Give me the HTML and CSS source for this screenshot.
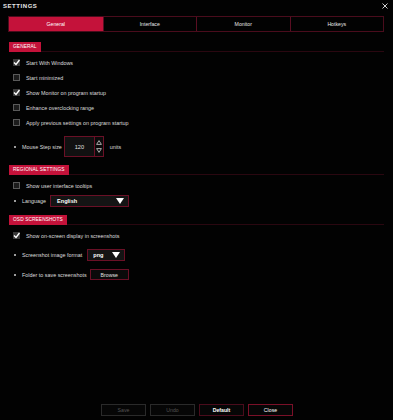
FILE: index.html
```html
<!DOCTYPE html>
<html>
<head>
<meta charset="utf-8">
<link rel="stylesheet" href="styles.css">
</head>
<body>
<div class="window">
  <div class="header">
    <div class="title">SETTINGS</div>
    <svg class="close" width="6" height="6" viewBox="0 0 6 6"><path d="M0.5 0.5 L5.5 5.5 M5.5 0.5 L0.5 5.5" stroke="#d0d0d0" stroke-width="1"/></svg>
  </div>
  <div class="tabs">
    <div class="tab active">General</div>
    <div class="tab">Interface</div>
    <div class="tab">Monitor</div>
    <div class="tab">Hotkeys</div>
  </div>

  <div class="section first">
    <div class="section-head"><span class="badge">GENERAL</span></div>
    <div class="row check-row"><span class="cb checked"><svg width="7" height="7" viewBox="0 0 7 7"><path d="M1 3.5 L3 5.5 L6.5 1" fill="none" stroke="#fff" stroke-width="1.4"/></svg></span><span class="lbl">Start With Windows</span></div>
    <div class="row check-row"><span class="cb"></span><span class="lbl">Start minimized</span></div>
    <div class="row check-row"><span class="cb checked"><svg width="7" height="7" viewBox="0 0 7 7"><path d="M1 3.5 L3 5.5 L6.5 1" fill="none" stroke="#fff" stroke-width="1.4"/></svg></span><span class="lbl">Show Monitor on program startup</span></div>
    <div class="row check-row"><span class="cb"></span><span class="lbl">Enhance overclocking range</span></div>
    <div class="row check-row"><span class="cb"></span><span class="lbl">Apply previous settings on program startup</span></div>
    <div class="row step-row">
      <span class="dot"></span><span class="blbl step-lbl">Mouse Step size</span>
      <div class="spin">
        <div class="spin-val">120</div>
        <div class="spin-btns">
          <svg width="6" height="5" viewBox="0 0 6 5"><path d="M3 0.6 L5.4 4.4 L0.6 4.4 Z" fill="none" stroke="#bbb" stroke-width="0.9"/></svg>
          <svg width="6" height="5" viewBox="0 0 6 5"><path d="M3 4.4 L5.4 0.6 L0.6 0.6 Z" fill="none" stroke="#bbb" stroke-width="0.9"/></svg>
        </div>
      </div>
      <span class="units">units</span>
    </div>
  </div>

  <div class="section regional">
    <div class="section-head"><span class="badge">REGIONAL SETTINGS</span></div>
    <div class="row check-row"><span class="cb"></span><span class="lbl">Show user interface tooltips</span></div>
    <div class="row opt-row">
      <span class="dot"></span><span class="blbl lang-lbl">Language</span>
      <div class="select lang"><span>English</span><svg width="8" height="6" viewBox="0 0 8 6"><path d="M0 0 L8 0 L4 6 Z" fill="#fff"/></svg></div>
    </div>
  </div>

  <div class="section osd">
    <div class="section-head"><span class="badge">OSD SCREENSHOTS</span></div>
    <div class="row check-row"><span class="cb checked"><svg width="7" height="7" viewBox="0 0 7 7"><path d="M1 3.5 L3 5.5 L6.5 1" fill="none" stroke="#fff" stroke-width="1.4"/></svg></span><span class="lbl">Show on-screen display in screenshots</span></div>
    <div class="row opt-row fmt">
      <span class="dot"></span><span class="blbl">Screenshot image format</span>
      <div class="select format"><span>png</span><svg width="8" height="6" viewBox="0 0 8 6"><path d="M0 0 L8 0 L4 6 Z" fill="#fff"/></svg></div>
    </div>
    <div class="row opt-row folder">
      <span class="dot"></span><span class="blbl folder-lbl">Folder to save screenshots</span>
      <div class="btn browse">Browse</div>
    </div>
  </div>

  <div class="footer">
    <div class="btn foot disabled">Save</div>
    <div class="btn foot disabled">Undo</div>
    <div class="btn foot default">Default</div>
    <div class="btn foot close-btn">Close</div>
  </div>
</div>
</body>
</html>
```

FILE: styles.css
```css
html, body {
  margin: 0;
  padding: 0;
  background: #000;
}
body {
  font-family: "Liberation Sans", Arial, sans-serif;
  color: #dcdcdc;
  font-size: 5.4px;
}
.window {
  width: 393px;
  height: 420px;
  display: flex;
  flex-direction: column;
  box-sizing: border-box;
  background: #020202;
}
.header {
  height: 16px;
  display: flex;
  justify-content: space-between;
  align-items: flex-start;
  padding: 2px 5px 0 3px;
  box-sizing: border-box;
}
.title {
  font-size: 6px;
  font-weight: bold;
  letter-spacing: 0.55px;
  line-height: 8px;
  color: #e8e8e8;
}
.close {
  margin-top: 1px;
}
.tabs {
  margin: 0 9px 0 8px;
  height: 16px;
  display: grid;
  grid-template-columns: repeat(4, 1fr);
  border: 1px solid #4a0c1c;
  box-sizing: border-box;
}
.tab {
  display: flex;
  align-items: center;
  justify-content: center;
  border-left: 1px solid #5a0e22;
  color: #e6e6e6;
  font-size: 5.2px;
}
.tab:first-child {
  border-left: none;
}
.tab.active {
  background: #c4123a;
  color: #fff;
}
.section {
  margin: 0 9px 0 9px;
  display: flex;
  flex-direction: column;
}
.section.first { margin-top: 10px; }
.section.regional { margin-top: 8px; }
.section.osd { margin-top: 7px; }
.section-head {
  display: flex;
  height: 10px;
  margin-bottom: 3px;
}
.section-head::after {
  content: "";
  flex: 1;
  border-bottom: 1px solid #2a0710;
}
.badge {
  background: #c4123a;
  color: #fff;
  font-size: 4.8px;
  line-height: 10px;
  padding: 0 4px;
  letter-spacing: 0.1px;
}
.row {
  display: flex;
  align-items: center;
  height: 15px;
  padding-left: 4px;
}
.cb {
  width: 7px;
  height: 7px;
  box-sizing: border-box;
  border: 1px solid #5a5a5a;
  background: #1c1c1c;
  display: flex;
  align-items: center;
  justify-content: center;
  margin-right: 6px;
}
.cb.checked {
  border: none;
  background: #3a3a3a;
}
.lbl { color: #dcdcdc; }
.dot {
  width: 2px;
  height: 2px;
  border-radius: 50%;
  background: #d0d0d0;
  margin: 0 6px 0 1px;
}
.blbl { margin-right: 5px; }
.step-lbl { margin-right: 2px; }
.lang-lbl { margin-right: 4px; }
.folder-lbl { margin-right: 3px; }
.step-row {
  height: 21px;
  margin-top: 6px;
}
.spin {
  display: flex;
  height: 21px;
}
.spin-val {
  width: 31px;
  box-sizing: border-box;
  border: 1px solid #6a1026;
  background: #111;
  display: flex;
  align-items: center;
  justify-content: center;
  color: #e0e0e0;
  font-size: 5.6px;
}
.spin-btns {
  width: 9px;
  box-sizing: border-box;
  border: 1px solid #6a1026;
  border-left: none;
  background: #0a0a0a;
  display: flex;
  flex-direction: column;
  align-items: center;
  justify-content: space-evenly;
}
.units { margin-left: 6px; }
.opt-row { height: 15px; }
.select {
  height: 12px;
  box-sizing: border-box;
  border: 1px solid #6a1026;
  background: #141414;
  display: flex;
  align-items: center;
  justify-content: space-between;
  padding: 0 4px 0 6px;
  font-weight: bold;
  color: #fff;
  font-size: 5.6px;
}
.select.lang { width: 79px; }
.select.format { width: 38px; padding-left: 5px; }
.fmt { margin-top: 4px; height: 16px; }
.folder { margin-top: 4px; }
.btn {
  box-sizing: border-box;
  display: flex;
  align-items: center;
  justify-content: center;
}
.browse {
  width: 39px;
  height: 11px;
  border: 1px solid #6a1026;
  background: #0a0a0a;
  color: #e0e0e0;
  font-size: 5.2px;
}
.footer {
  margin-top: auto;
  margin-bottom: 4px;
  display: flex;
  justify-content: center;
  gap: 4px;
  padding-left: 1px;
}
.foot {
  width: 45px;
  height: 12px;
  border: 1px solid #2a2a2a;
  background: #060606;
  font-size: 5.2px;
}
.foot.disabled { color: #555; }
.foot.default {
  border-color: #4a0c1c;
  color: #fff;
  font-weight: bold;
}
.foot.close-btn {
  border-color: #7a1028;
  color: #fff;
}
```
